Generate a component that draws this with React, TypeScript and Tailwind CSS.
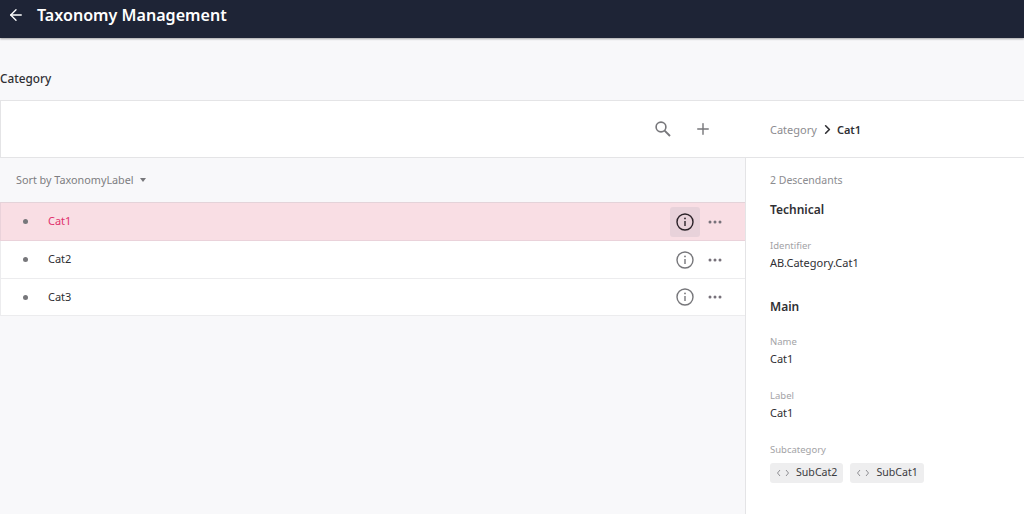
import { ArrowLeft, ChevronRight, Plus } from "lucide-react";

const rows = [
  { name: "Cat1", active: true },
  { name: "Cat2", active: false },
  { name: "Cat3", active: false },
];

function Field({ label, value, className }: { label: string; value: string; className: string }) {
  return (
    <div className={className}>
      <div className="text-[9.5px] leading-[14px] text-[#a3a3a6]">{label}</div>
      <div className="mt-[2px] text-[11px] leading-[16px] text-[#2f2f33]">{value}</div>
    </div>
  );
}

function Chip({ label }: { label: string }) {
  return (
    <div className="flex h-5 items-center rounded-[3px] bg-[#eeeeef] px-[6px] text-[10.6px] text-[#3a3a3e]">
      <svg width="14" height="10" viewBox="0 0 14 10" fill="none" stroke="#8f8f93" strokeWidth="1" className="mr-[6px]">
        <path d="M4 2 1.5 5 4 8" />
        <path d="M10 2l2.5 3L10 8" />
      </svg>
      {label}
    </div>
  );
}

function InfoIcon({ className }: { className: string }) {
  return (
    <svg width="18" height="18" viewBox="0 0 18 18" fill="none" stroke="currentColor" className={className}>
      <circle cx="9" cy="9" r="8" strokeWidth="1.4" />
      <path d="M9 8v5" strokeWidth="1.4" />
      <circle cx="9" cy="5.4" r="0.9" fill="currentColor" stroke="none" />
    </svg>
  );
}

export default function App() {
  return (
    <div className="flex h-[514px] w-[1024px] flex-col overflow-hidden bg-[#f8f8fa] font-['Noto_Sans',sans-serif]">
      <header className="flex h-[38px] shrink-0 items-center bg-[#1e2436] pl-[7px] text-white shadow-[0_1px_2px_rgba(0,0,0,0.35)]">
        <ArrowLeft size={18} strokeWidth={1.8} className="mb-[8px]" />
        <h1 className="mb-[7px] ml-3 text-[16.1px] font-semibold">Taxonomy Management</h1>
      </header>

      <div className="flex h-[62px] shrink-0 items-end pb-[14px] text-[11.8px] font-medium leading-[16px] text-[#303034]">
        Category
      </div>

      <div className="flex h-[58px] shrink-0 border-y border-[#e4e4e6] bg-white">
        <div className="flex w-[746px] items-center justify-end border-l border-[#e4e4e6] pr-[34px] text-[#77777b]">
          <svg width="18" height="18" viewBox="0 0 18 18" fill="none" stroke="currentColor" strokeWidth="1.6">
            <circle cx="7" cy="7" r="4.9" />
            <path d="m10.6 10.6 5.4 5.4" strokeWidth="1.9" />
          </svg>
          <Plus size={18} strokeWidth={1.9} className="ml-[22px]" />
        </div>
        <div className="flex flex-1 items-center pl-6 pt-[2px] text-[11px]">
          <span className="text-[#8c8c90]">Category</span>
          <ChevronRight size={15} strokeWidth={2.6} className="mb-[1px] ml-[3px] mr-[2px] text-[#303034]" />
          <span className="font-semibold text-[#303034]">Cat1</span>
        </div>
      </div>

      <div className="flex flex-1">
        <div className="w-[746px] border-r border-[#e4e4e6]">
          <div className="flex h-[44px] items-center pl-4 text-[10.8px] text-[#7d7d81]">
            Sort by TaxonomyLabel
            <span className="ml-[6px] h-0 w-0 border-x-[3.5px] border-t-[4px] border-x-transparent border-t-[#77777b]" />
          </div>
          <div className="border-t border-[#e4d3d9]">
            {rows.map((row) => (
              <div
                key={row.name}
                className={`flex h-[38px] items-center border-b border-l pr-[23px] last:h-[37px] ${
                  row.active ? "border-[#ead2da] bg-[#f9dee4]" : "border-[#ececee] bg-white"
                }`}
              >
                <span className="ml-[22px] size-[5px] rounded-full bg-[#77777b]" />
                <span className={`ml-[20px] flex-1 text-[11px] ${row.active ? "text-[#e0316c]" : "text-[#2f2f33]"}`}>
                  {row.name}
                </span>
                <span className={`flex size-[30px] items-center justify-center rounded-[3px] ${row.active ? "bg-[#e8d2da]" : ""}`}>
                  <InfoIcon className={row.active ? "text-[#2a2228]" : "text-[#77777b]"} />
                </span>
                <svg width="14" height="4" viewBox="0 0 14 4" fill="#77717a" className="ml-2">
                  <circle cx="2" cy="2" r="1.5" />
                  <circle cx="7" cy="2" r="1.5" />
                  <circle cx="12" cy="2" r="1.5" />
                </svg>
              </div>
            ))}
          </div>
        </div>

        <aside className="flex-1 bg-white pl-6">
          <div className="mt-[15px] text-[10.5px] leading-[14px] text-[#8c8c90]">2 Descendants</div>
          <h2 className="mt-[15px] text-[12px] font-semibold leading-[16px] text-[#303034]">Technical</h2>
          <Field label="Identifier" value="AB.Category.Cat1" className="mt-[21px]" />
          <h2 className="mt-[28px] text-[12px] font-semibold leading-[16px] text-[#303034]">Main</h2>
          <Field label="Name" value="Cat1" className="mt-[20px]" />
          <Field label="Label" value="Cat1" className="mt-[22px]" />
          <div className="mt-[22px] text-[9.5px] leading-[14px] text-[#a3a3a6]">Subcategory</div>
          <div className="mt-[6px] flex gap-[7px]">
            <Chip label="SubCat2" />
            <Chip label="SubCat1" />
          </div>
        </aside>
      </div>
    </div>
  );
}
